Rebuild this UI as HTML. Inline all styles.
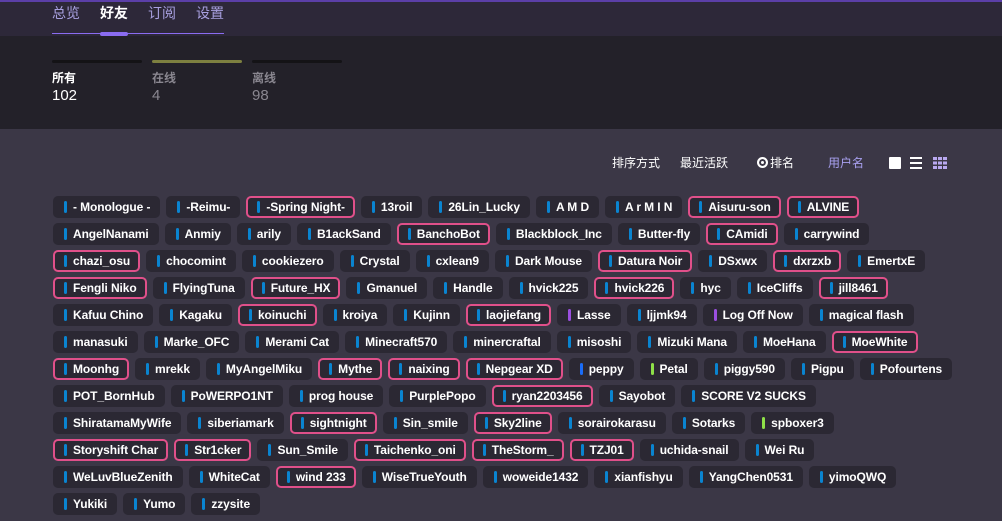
<!DOCTYPE html>
<html><head><meta charset="utf-8"><style>
*{margin:0;padding:0;box-sizing:border-box}
body{width:1002px;height:521px;overflow:hidden;background:#3b3746;font-family:"Liberation Sans","Noto Sans CJK SC",sans-serif;color:#fff;position:relative}
.top{position:absolute;left:0;top:0;width:1002px;height:36px;background:#2d2839;border-top:2px solid #5b3fa8}
.nav{position:absolute;left:52px;top:3px;font-size:14px;color:#a8a0e0}
.nav span{position:absolute;white-space:nowrap}
.navline{position:absolute;left:52px;top:33px;width:172px;height:1px;background:#8a6cf0}
.navact{position:absolute;left:100px;top:32px;width:28px;height:4px;border-radius:2px;background:#8a6cf0}
.stats{position:absolute;left:0;top:36px;width:1002px;height:93px;background:#232129}
.bar{position:absolute;top:24px;width:90px;height:3px;border-radius:2px}
.lab{position:absolute;top:33px;font-size:12px;font-weight:bold}
.num{position:absolute;top:51px;font-size:15px}
.sort{position:absolute;top:154px;font-size:12px;white-space:nowrap}
.rows{position:absolute;left:53px;top:196px}
.row{display:flex;gap:6px;height:27px}
.t{height:22px;background:#2b2833;border-radius:5px;padding:0 8px 0 9px;display:flex;align-items:center;font-size:12px;font-weight:bold;white-space:nowrap;border:2px solid transparent;letter-spacing:-0.1px}
.t::before{content:"";width:3px;height:12px;border-radius:2px;background:#0a84d0;margin-right:6px}
.p{border-color:#e0508a}
.v::before{background:#9b4fe0}.g::before{background:#8ee048}.b::before{background:#1a6cf8}
</style></head><body>
<div class="top"></div>
<div class="nav"><span style="left:0">总览</span><span style="left:48px;color:#fff;font-weight:bold">好友</span><span style="left:96px">订阅</span><span style="left:144px">设置</span></div>
<div class="navline"></div><div class="navact"></div>
<div class="stats">
<div class="bar" style="left:52px;background:#141316"></div>
<div class="bar" style="left:152px;background:#7d8040"></div>
<div class="bar" style="left:252px;background:#141316"></div>
<div class="lab" style="left:52px">所有</div><div class="lab" style="left:152px;color:#8a8790">在线</div><div class="lab" style="left:252px;color:#8a8790">离线</div>
<div class="num" style="left:52px">102</div><div class="num" style="left:152px;color:#8a8790">4</div><div class="num" style="left:252px;color:#8a8790">98</div>
</div>
<div class="sort" style="left:612px">排序方式</div>
<div class="sort" style="left:680px">最近活跃</div>
<div class="sort" style="left:757px"><span style="display:inline-block;width:11px;height:11px;border-radius:50%;border:2px solid #fff;box-shadow:inset 0 0 0 2px #3b3746;background:#fff;vertical-align:-1px;margin-right:2px"></span>排名</div>
<div class="sort" style="left:828px;color:#a8a0f0">用户名</div>
<div style="position:absolute;left:889px;top:157px;width:12px;height:12px;background:#fff;border-radius:1px"></div>
<div style="position:absolute;left:910px;top:157px;width:12px;height:12px;border-top:2px solid #fff;border-bottom:2px solid #fff"><div style="margin-top:3px;height:2px;background:#fff"></div></div>
<div style="position:absolute;left:933px;top:157px;width:14px;height:12px;background:repeating-linear-gradient(90deg,#b9a8f0 0 4px,transparent 4px 5px),#3b3746;-webkit-mask:repeating-linear-gradient(0deg,#000 0 3px,transparent 3px 4.5px)"></div>
<div class="rows">
<div class="row"><span class="t">- Monologue -</span><span class="t">-Reimu-</span><span class="t p">-Spring Night-</span><span class="t">13roil</span><span class="t">26Lin_Lucky</span><span class="t">A M D</span><span class="t">A r M I N</span><span class="t p">Aisuru-son</span><span class="t p">ALVINE</span></div>
<div class="row"><span class="t">AngelNanami</span><span class="t">Anmiy</span><span class="t">arily</span><span class="t">B1ackSand</span><span class="t p">BanchoBot</span><span class="t">Blackblock_Inc</span><span class="t">Butter-fly</span><span class="t p">CAmidi</span><span class="t">carrywind</span></div>
<div class="row"><span class="t p">chazi_osu</span><span class="t">chocomint</span><span class="t">cookiezero</span><span class="t">Crystal</span><span class="t">cxlean9</span><span class="t">Dark Mouse</span><span class="t p">Datura Noir</span><span class="t">DSxwx</span><span class="t p">dxrzxb</span><span class="t">EmertxE</span></div>
<div class="row"><span class="t p">Fengli Niko</span><span class="t">FlyingTuna</span><span class="t p">Future_HX</span><span class="t">Gmanuel</span><span class="t">Handle</span><span class="t">hvick225</span><span class="t p">hvick226</span><span class="t">hyc</span><span class="t">IceCliffs</span><span class="t p">jill8461</span></div>
<div class="row"><span class="t">Kafuu Chino</span><span class="t">Kagaku</span><span class="t p">koinuchi</span><span class="t">kroiya</span><span class="t">Kujinn</span><span class="t p">laojiefang</span><span class="t v">Lasse</span><span class="t">ljjmk94</span><span class="t v">Log Off Now</span><span class="t">magical flash</span></div>
<div class="row"><span class="t">manasuki</span><span class="t">Marke_OFC</span><span class="t">Merami Cat</span><span class="t">Minecraft570</span><span class="t">minercraftal</span><span class="t">misoshi</span><span class="t">Mizuki Mana</span><span class="t">MoeHana</span><span class="t p">MoeWhite</span></div>
<div class="row"><span class="t p">Moonhg</span><span class="t">mrekk</span><span class="t">MyAngelMiku</span><span class="t p">Mythe</span><span class="t p">naixing</span><span class="t p">Nepgear XD</span><span class="t b">peppy</span><span class="t g">Petal</span><span class="t">piggy590</span><span class="t">Pigpu</span><span class="t">Pofourtens</span></div>
<div class="row"><span class="t">POT_BornHub</span><span class="t">PoWERPO1NT</span><span class="t">prog house</span><span class="t">PurplePopo</span><span class="t p">ryan2203456</span><span class="t">Sayobot</span><span class="t">SCORE V2 SUCKS</span></div>
<div class="row"><span class="t">ShiratamaMyWife</span><span class="t">siberiamark</span><span class="t p">sightnight</span><span class="t">Sin_smile</span><span class="t p">Sky2line</span><span class="t">sorairokarasu</span><span class="t">Sotarks</span><span class="t g">spboxer3</span></div>
<div class="row"><span class="t p">Storyshift Char</span><span class="t p">Str1cker</span><span class="t">Sun_Smile</span><span class="t p">Taichenko_oni</span><span class="t p">TheStorm_</span><span class="t p">TZJ01</span><span class="t">uchida-snail</span><span class="t">Wei Ru</span></div>
<div class="row"><span class="t">WeLuvBlueZenith</span><span class="t">WhiteCat</span><span class="t p">wind 233</span><span class="t">WiseTrueYouth</span><span class="t">woweide1432</span><span class="t">xianfishyu</span><span class="t">YangChen0531</span><span class="t">yimoQWQ</span></div>
<div class="row"><span class="t">Yukiki</span><span class="t">Yumo</span><span class="t">zzysite</span></div>
</div>
</body></html>
